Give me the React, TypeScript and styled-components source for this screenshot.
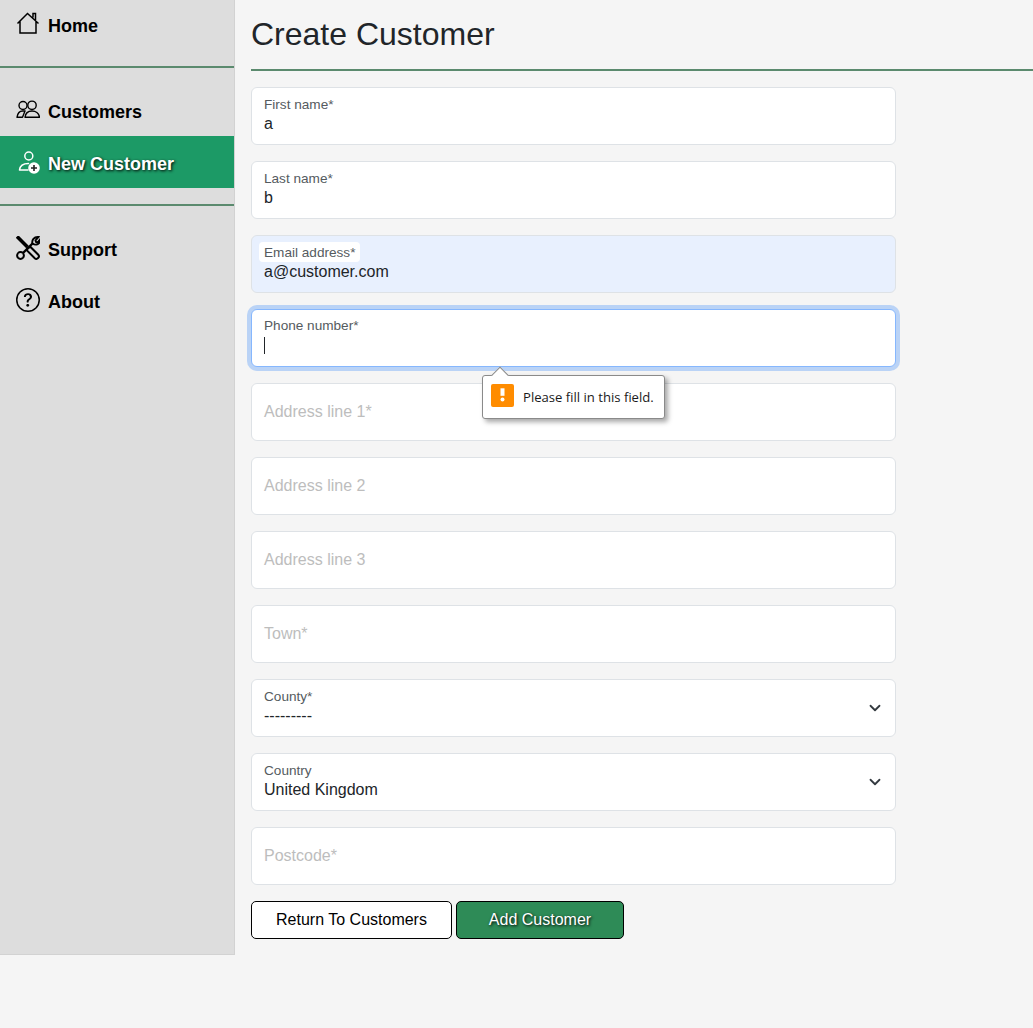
import React from "react";
import styled, { createGlobalStyle } from "styled-components";
import { BsQuestionCircle } from "react-icons/bs";

const Global = createGlobalStyle`
  html, body { margin: 0; padding: 0; background: #f5f5f5; }
  body { font-family: "Liberation Sans", Arial, sans-serif; color: #212529; }
  * { box-sizing: border-box; }
`;

const Page = styled.div`
  display: flex;
  align-items: flex-start;
  min-height: 1028px;
`;

const Sidebar = styled.nav`
  width: 235px;
  height: 955px;
  flex: none;
  background: #dddddd;
  border-right: 1px solid #d2d2d2;
  border-bottom: 1px solid #d2d2d2;
`;

const NavLink = styled.a<{ $active?: boolean }>`
  display: flex;
  align-items: center;
  height: 52px;
  padding: 4px 0 0 16px;
  gap: 8px;
  font-size: 18px;
  font-weight: 700;
  color: ${(p) => (p.$active ? "#fff" : "#000")};
  background: ${(p) => (p.$active ? "#1c9a66" : "transparent")};
  text-shadow: ${(p) => (p.$active ? "1px 1px 3px #000" : "none")};
`;

const HomeLink = styled(NavLink)`
  padding-top: 0;
`;

const IconBox = styled.span<{ $top?: number }>`
  display: block;
  width: 24px;
  height: 24px;
  flex: none;
  position: relative;
  top: ${(p) => p.$top ?? -2}px;
  color: inherit;
  svg { display: block; width: 24px; height: 24px; }
`;

const Rule = styled.hr<{ $before: number; $after: number }>`
  margin: ${(p) => p.$before}px 0 ${(p) => p.$after}px;
  border: 0;
  height: 2px;
  background: #5b8a6e;
`;

const Main = styled.main`
  flex: 1;
  padding: 0 0 0 16px;
  min-width: 0;
`;

const Title = styled.h1`
  margin: 0;
  height: 71px;
  padding-top: 15px;
  font-size: 32px;
  line-height: 38px;
  font-weight: 400;
  color: #212529;
  border-bottom: 2px solid #5b8a6e;
`;

const Form = styled.form`
  width: 645px;
  padding-top: 16px;
  display: flex;
  flex-direction: column;
  gap: 16px;
`;

const Field = styled.div<{ $autofill?: boolean; $focus?: boolean }>`
  height: 58px;
  padding: 0 12px;
  display: flex;
  align-items: center;
  border-radius: 6px;
  background: ${(p) => (p.$autofill ? "#e8f0fe" : "#fff")};
  border: 1px solid ${(p) => (p.$focus ? "#86b7fe" : "#dee2e6")};
  box-shadow: ${(p) => (p.$focus ? "0 0 0 4px rgba(13,110,253,.25)" : "none")};
`;

const FieldBody = styled.div`
  flex: 1;
  min-width: 0;
  padding-bottom: 2px;
`;

const Label = styled.label<{ $chip?: boolean }>`
  display: block;
  width: fit-content;
  font-size: 13.6px;
  line-height: 17px;
  color: #555b60;
  margin: ${(p) => (p.$chip ? "-2px 0 0 -5px" : "0 0 1px")};
  padding: ${(p) => (p.$chip ? "2px 5px 1px" : "0")};
  background: ${(p) => (p.$chip ? "#fff" : "transparent")};
  border-radius: 4px;
`;

const Value = styled.div`
  font-size: 16px;
  line-height: 20px;
  height: 20px;
  color: #212529;
`;

const EmptyLabel = styled.label`
  font-size: 16px;
  color: #bdbdbd;
`;

const Caret = styled.span`
  display: block;
  width: 1px;
  height: 17px;
  margin-top: 3px;
  background: #212529;
`;

const Chevron = styled.svg`
  width: 12px;
  height: 12px;
  flex: none;
  margin-right: 2px;
`;

const Buttons = styled.div`
  display: flex;
  gap: 4px;
`;

const Button = styled.button<{ $primary?: boolean }>`
  height: 38px;
  width: ${(p) => (p.$primary ? "168px" : "201px")};
  border: 1px solid #000;
  border-radius: 5px;
  font-family: inherit;
  font-size: 16px;
  color: ${(p) => (p.$primary ? "#fff" : "#000")};
  background: ${(p) => (p.$primary ? "#2e8b57" : "#fff")};
  text-shadow: ${(p) => (p.$primary ? "1px 1px 3px #000" : "none")};
`;

const Tip = styled.div`
  position: absolute;
  left: 482px;
  top: 375px;
  width: 183px;
  height: 44px;
  display: flex;
  align-items: center;
  gap: 9px;
  padding-left: 8px;
  background: #fff;
  border: 1px solid #8a8a8a;
  border-radius: 3px;
  box-shadow: 3px 3px 5px rgba(0,0,0,.35);
  font-family: "Open Sans", "Noto Sans", sans-serif;
  font-size: 13.1px;
  color: #1a1a1a;
  white-space: nowrap;
`;

const TipArrow = styled.span`
  position: absolute;
  left: 11px;
  top: -7px;
  width: 12px;
  height: 12px;
  background: #fff;
  border-left: 1px solid #8a8a8a;
  border-top: 1px solid #8a8a8a;
  transform: rotate(45deg);
`;

const Warn = styled.svg`
  width: 23px;
  height: 23px;
  flex: none;
  align-self: flex-start;
  margin-top: 8px;
`;

const HouseIcon = () => (
  <svg viewBox="0 0 24 24">
    <path
      d="M1.5 12.5 L11.5 2.5 L22.5 12.5 M4 10 V22 H20 V10 M17 6.5 V2.5 H19.5 V9"
      fill="none"
      stroke="currentColor"
      strokeWidth="1.5"
    />
  </svg>
);

const PeopleIcon = () => (
  <svg viewBox="0 0 24 24">
    <g fill="none" stroke="currentColor" strokeWidth="1.4">
      <circle cx="7" cy="7.5" r="4" />
      <circle cx="16" cy="7.3" r="4.2" />
      <path d="M9 13 H6.5 C3.5 13 1.5 16 1 19.3 H6.5 Z" strokeLinejoin="round" />
      <path d="M9 19.3 C9.5 15 12.5 13 16 13 C19.5 13 23 15 23.5 19.3 Z" strokeLinejoin="round" />
    </g>
  </svg>
);

const PersonPlusIcon = () => (
  <svg viewBox="0 0 24 24">
    <circle cx="12.8" cy="6" r="4" fill="none" stroke="currentColor" strokeWidth="1.5" />
    <path
      d="M3.5 20 C4 15.5 8 13.5 12.5 13.5 M3.5 20 H12"
      fill="none"
      stroke="currentColor"
      strokeWidth="1.5"
      strokeLinecap="round"
    />
    <circle cx="18" cy="18" r="5.8" fill="#fff" />
    <path d="M18 15 V21 M15 18 H21" stroke="#222" strokeWidth="1.6" />
  </svg>
);

const ToolsIcon = () => (
  <svg viewBox="0 0 24 24">
    <g fill="none" stroke="currentColor">
      <circle cx="4.5" cy="19.5" r="3.4" strokeWidth="2" />
      <path d="M7 17 L17 7" strokeWidth="2.4" />
      <path
        d="M16.5 7.5 C15.5 4.5 18 0.5 22.5 1 L19.5 4.5 L20 6 L21.5 6.5 L24 3.5 C24.5 8 20 10 16.5 7.5 Z"
        strokeWidth="1.9"
      />
      <path d="M1 0.5 L11.5 11" strokeWidth="3.6" />
      <path d="M11.5 12 L14.5 11 L22.5 19 C24 21 21 24 19 22.5 L11 14.5 Z" strokeWidth="2" />
    </g>
  </svg>
);

const Down = () => (
  <Chevron viewBox="0 0 16 16" aria-hidden="true">
    <path d="m2 5 6 6 6-6" fill="none" stroke="#343a40" strokeWidth="2.4" strokeLinecap="round" strokeLinejoin="round" />
  </Chevron>
);

export default function App() {
  return (
    <>
      <Global />
      <Page>
        <Sidebar>
          <HomeLink>
            <IconBox $top={-3}><HouseIcon /></IconBox>Home
          </HomeLink>
          <Rule $before={14} $after={16} />
          <NavLink>
            <IconBox><PeopleIcon /></IconBox>Customers
          </NavLink>
          <NavLink $active>
            <IconBox><PersonPlusIcon /></IconBox>New Customer
          </NavLink>
          <Rule $before={16} $after={16} />
          <NavLink>
            <IconBox><ToolsIcon /></IconBox>Support
          </NavLink>
          <NavLink>
            <IconBox><BsQuestionCircle /></IconBox>About
          </NavLink>
        </Sidebar>
        <Main>
          <Title>Create Customer</Title>
          <Form>
            <Field>
              <FieldBody><Label>First name*</Label><Value>a</Value></FieldBody>
            </Field>
            <Field>
              <FieldBody><Label>Last name*</Label><Value>b</Value></FieldBody>
            </Field>
            <Field $autofill>
              <FieldBody><Label $chip>Email address*</Label><Value>a@customer.com</Value></FieldBody>
            </Field>
            <Field $focus>
              <FieldBody><Label>Phone number*</Label><Value><Caret /></Value></FieldBody>
            </Field>
            <Field><EmptyLabel>Address line 1*</EmptyLabel></Field>
            <Field><EmptyLabel>Address line 2</EmptyLabel></Field>
            <Field><EmptyLabel>Address line 3</EmptyLabel></Field>
            <Field><EmptyLabel>Town*</EmptyLabel></Field>
            <Field>
              <FieldBody><Label>County*</Label><Value>---------</Value></FieldBody>
              <Down />
            </Field>
            <Field>
              <FieldBody><Label>Country</Label><Value>United Kingdom</Value></FieldBody>
              <Down />
            </Field>
            <Field><EmptyLabel>Postcode*</EmptyLabel></Field>
            <Buttons>
              <Button type="button">Return To Customers</Button>
              <Button type="button" $primary>Add Customer</Button>
            </Buttons>
          </Form>
        </Main>
        <Tip>
          <TipArrow />
          <Warn viewBox="0 0 23 23" aria-hidden="true">
            <rect width="23" height="23" rx="2" fill="#ff8c00" />
            <rect x="9.5" y="4.3" width="4" height="7.5" fill="#fff" />
            <circle cx="11.5" cy="15.5" r="2" fill="#fff" />
          </Warn>
          Please fill in this field.
        </Tip>
      </Page>
    </>
  );
}
